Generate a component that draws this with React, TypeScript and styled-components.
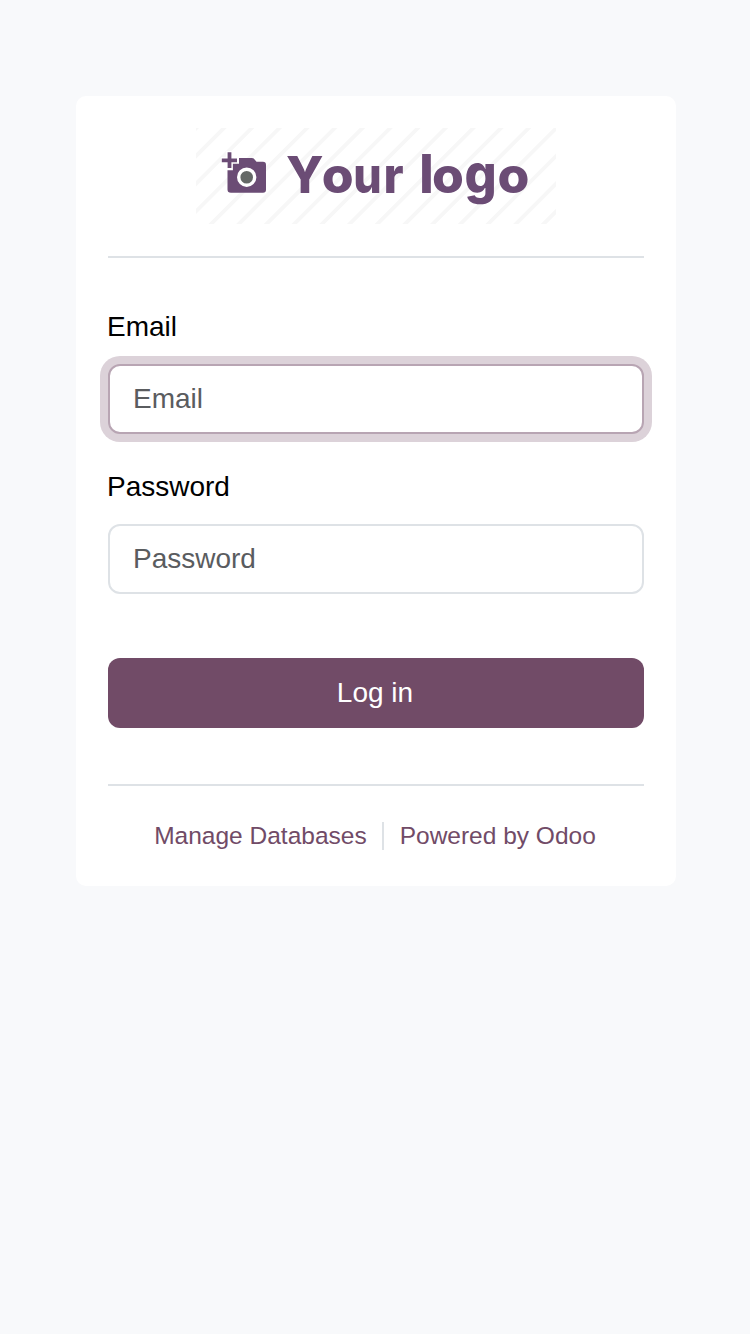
import React from "react";
import styled, { createGlobalStyle } from "styled-components";

const GlobalStyle = createGlobalStyle`
  *, *::before, *::after { box-sizing: border-box; }
  body {
    margin: 0;
    background: #f8f9fb;
    font-family: "Liberation Sans", Arial, sans-serif;
    font-size: 28px;
    line-height: 42px;
    color: #000;
  }
`;

const Page = styled.main`
  min-height: 100vh;
  padding: 96px 74px 0 76px;
`;

const Card = styled.section`
  width: 600px;
  height: 790px;
  padding: 32px;
  background: #fff;
  border-radius: 10px;
`;

const LogoHeader = styled.header`
  height: 130px;
  display: flex;
  justify-content: center;
  align-items: flex-start;
  border-bottom: 2px solid #dee2e6;
  svg { display: block; }
`;

const LogoMark = styled.g`
  filter: blur(0.6px);
`;

const Form = styled.form`
  display: flex;
  flex-direction: column;
  padding-top: 48px;
`;

const Field = styled.div`
  display: flex;
  flex-direction: column;
  margin-bottom: 32px;
`;

const Label = styled.label`
  height: 42px;
  margin: 0 0 16px -1px;
`;

const Input = styled.input<{ $active?: boolean }>`
  width: 100%;
  height: 70px;
  padding: 0 23px;
  font: inherit;
  color: #495057;
  background: #fff;
  border: 2px solid ${(p) => (p.$active ? "#b8a5b3" : "#dee2e6")};
  border-radius: 12px;
  outline: none;
  box-shadow: ${(p) => (p.$active ? "0 0 0 8px #dcd2d9" : "none")};
  &::placeholder { color: #5a5c5f; opacity: 1; }
`;

const Submit = styled.button`
  height: 70px;
  margin-top: 32px;
  padding: 0 2px 0 0;
  border: 0;
  border-radius: 12px;
  background: #714b67;
  color: #fff;
  font: inherit;
`;

const Footer = styled.footer`
  margin-top: 56px;
  padding: 36px 2px 0 0;
  border-top: 2px solid #dee2e6;
  display: flex;
  justify-content: center;
  font-size: 24.5px;
  line-height: 28px;
`;

const FooterLink = styled.a<{ $divided?: boolean }>`
  color: #714b67;
  text-decoration: none;
  height: 28px;
  padding: ${(p) => (p.$divided ? "0 15px 0 0" : "0 0 0 16px")};
  border-right: ${(p) => (p.$divided ? "2px solid #dee2e6" : "0")};
`;

// Letter, left offset, horizontal scale, vertical scale
const letters: [string, number, number, number][] = [
  ["Y", 90, 0.98, 1.01],
  ["o", 125.8, 1.01, 0.98],
  ["u", 157.2, 0.88, 0.97],
  ["r", 187.6, 0.94, 0.97],
  ["l", 223.3, 1, 1.05],
  ["o", 236.1, 1.01, 0.98],
  ["g", 268.6, 0.99, 1.05],
  ["o", 301.5, 1.01, 0.98],
];

const Logo = () => (
  <svg width="360" height="96" viewBox="0 0 360 96" role="img" aria-label="Your logo">
    <LogoMark>
      <g stroke="#f7f7f7" strokeWidth="3.8">
        {Array.from({ length: 18 }, (_, i) => {
          const x = -95.7 + i * 27.7;
          return <path key={i} d={`M${x - 4} 100L${x + 100} -4`} />;
        })}
      </g>
      <path
        fill="#6b4c75"
        d="M35 30H56Q58 30 59 32L60.5 33.8H67Q70 33.8 70 37V61.5Q70 64.7 67 64.7H35Q31.5 64.7 31.5 61.5V33Z"
      />
      <path stroke="#fff" strokeWidth="6.8" d="M33.5 23V42.2M25 32.3H43" />
      <path stroke="#6b4c75" strokeWidth="3.8" d="M33.5 24.3V40M25.8 32.3H41" />
      <circle cx="50.7" cy="49.2" r="8" fill="#646866" stroke="#fff" strokeWidth="3.4" />
      <g fill="#6b4c75" fontFamily="Inter, sans-serif" fontWeight="800" fontSize="51">
        {letters.map(([letter, x, sx, sy], i) => (
          <text key={i} transform={`translate(${x} 64.5) scale(${sx} ${sy})`}>{letter}</text>
        ))}
      </g>
    </LogoMark>
  </svg>
);

export default function App() {
  return (
    <>
      <GlobalStyle />
      <Page>
        <Card>
          <LogoHeader><Logo /></LogoHeader>
          <Form onSubmit={(e) => e.preventDefault()}>
            <Field>
              <Label htmlFor="email">Email</Label>
              <Input id="email" type="text" placeholder="Email" $active />
            </Field>
            <Field>
              <Label htmlFor="password">Password</Label>
              <Input id="password" type="password" placeholder="Password" />
            </Field>
            <Submit type="submit">Log in</Submit>
          </Form>
          <Footer>
            <FooterLink $divided>Manage Databases</FooterLink>
            <FooterLink>Powered by Odoo</FooterLink>
          </Footer>
        </Card>
      </Page>
    </>
  );
}
